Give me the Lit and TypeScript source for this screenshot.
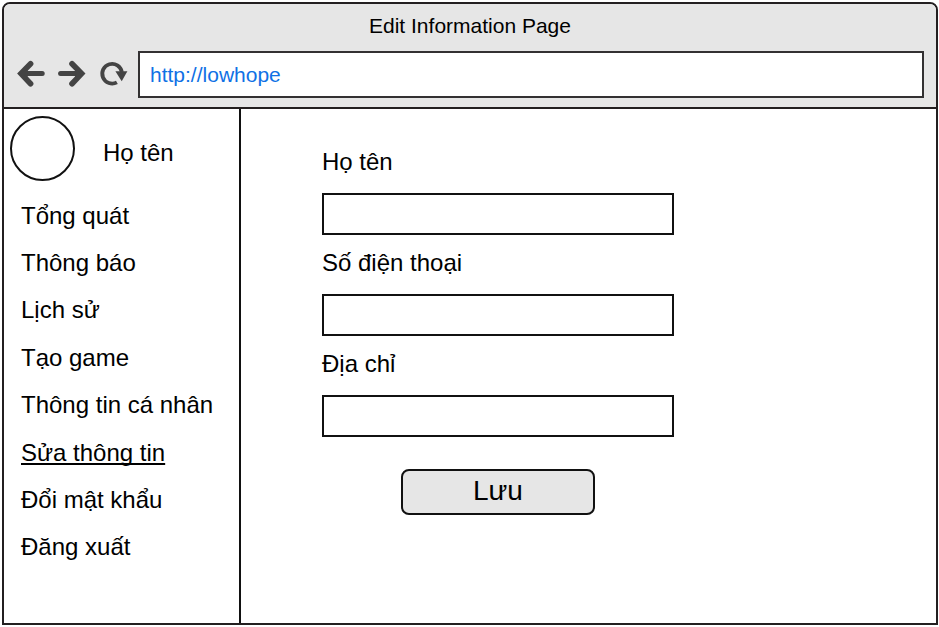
import { LitElement, html, css } from "lit";
import { customElement } from "lit/decorators.js";

@customElement("browser-bar")
class BrowserBar extends LitElement {
  static styles = css`
    :host {
      display: block;
      box-sizing: border-box;
      padding: 6px 12px 9px;
      background: #e6e6e6;
      border-bottom: 2px solid #231f20;
      border-radius: 6px 6px 0 0;
    }
    .title {
      margin: 0 0 9px;
      font-size: 21px;
      font-weight: 400;
      line-height: 32px;
      text-align: center;
    }
    .tools {
      display: flex;
      align-items: center;
    }
    .tool {
      display: flex;
      padding: 0 0 2px;
      border: 0;
      background: none;
      margin-right: 12px;
    }
    .reload {
      margin-right: 10px;
    }
    .address {
      flex: 1;
      min-width: 0;
      box-sizing: border-box;
      height: 47px;
      margin: 0;
      padding: 0 10px;
      border: 2px solid #333132;
      border-radius: 0;
      background: #fff;
      color: #1071e5;
      font: inherit;
      font-size: 21px;
    }
  `;

  render() {
    return html`
      <h1 class="title">Edit Information Page</h1>
      <div class="tools">
        <button class="tool" type="button" aria-label="Back">
          <svg width="29" height="28" viewBox="0 0 29 28" fill="none" stroke="#444" stroke-linecap="round">
            <path d="M14.6 3.7 5 13.6 14.6 23.7" stroke-width="5.6" />
            <path d="M6 13.6H26.2" stroke-width="5" />
            <path d="M6 13.6 11 9V18.200Z" fill="#444" stroke-width="1" />
          </svg>
        </button>
        <button class="tool" type="button" aria-label="Forward">
          <svg width="29" height="28" viewBox="0 0 29 28" fill="none" stroke="#444" stroke-linecap="round">
            <path d="M15 3.7 24.600 13.6 15 23.7" stroke-width="5.6" />
            <path d="M3.600 13.6H23.600" stroke-width="5" />
            <path d="M23.600 13.6 18.600 9V18.200Z" fill="#444" stroke-width="1" />
          </svg>
        </button>
        <button class="tool reload" type="button" aria-label="Reload">
          <svg width="30" height="28" viewBox="0 0 30 28" fill="none">
            <path d="M18.900 22.400A9.900 9.900 0 1 1 23.900 12" stroke="#444" stroke-width="3.800" />
            <path d="M17.400 11.200H29.400L23.700 21.200Z" fill="#444" />
          </svg>
        </button>
        <input class="address" type="text" aria-label="Address" value="http://lowhope" />
      </div>
    `;
  }
}

@customElement("side-menu")
class SideMenu extends LitElement {
  static styles = css`
    :host {
      display: flex;
      flex-direction: column;
      box-sizing: border-box;
      width: 237px;
      border-right: 2px solid #111;
      padding: 7px 0 52px;
    }
    .profile {
      display: flex;
      align-items: flex-start;
      gap: 28px;
      padding-left: 6px;
      height: 76px;
    }
    .avatar {
      box-sizing: border-box;
      width: 65px;
      height: 65px;
      border: 2px solid #111;
      border-radius: 50%;
    }
    .name {
      line-height: 73px;
    }
    .menu {
      flex: 1;
      display: grid;
      grid-auto-rows: 1fr;
      align-items: center;
      margin: 0;
      padding: 0 0 0 17px;
      list-style: none;
    }
    .link {
      color: inherit;
      text-decoration: none;
      white-space: nowrap;
    }
    .current {
      text-decoration: underline 2px;
      text-underline-offset: 2px;
      text-decoration-skip-ink: none;
    }
  `;

  private items = [
    "Tổng quát",
    "Thông báo",
    "Lịch sử",
    "Tạo game",
    "Thông tin cá nhân",
    "Sửa thông tin",
    "Đổi mật khẩu",
    "Đăng xuất",
  ];

  render() {
    return html`
      <div class="profile">
        <div class="avatar"></div>
        <span class="name">Họ tên</span>
      </div>
      <ul class="menu">
        ${this.items.map(
          (item) => html`<li>
            <a class="link ${item === "Sửa thông tin" ? "current" : ""}" href="#">${item}</a>
          </li>`
        )}
      </ul>
    `;
  }
}

@customElement("edit-form")
class EditForm extends LitElement {
  static styles = css`
    :host {
      display: block;
      flex: 1;
      min-width: 0;
      padding: 37px 81px;
    }
    .form {
      display: flex;
      flex-direction: column;
      max-width: 352px;
    }
    .label {
      line-height: 32px;
      margin-bottom: 15px;
    }
    .field {
      box-sizing: border-box;
      width: 100%;
      height: 42px;
      margin: 0 0 12px;
      padding: 0 8px;
      border: 2px solid #111;
      border-radius: 0;
      background: #fff;
      font: inherit;
    }
    .save {
      align-self: center;
      box-sizing: border-box;
      width: 194px;
      height: 46px;
      margin: 20px 0 0;
      padding: 0 0 2px;
      border: 2px solid #111;
      border-radius: 8px;
      background: #e6e6e6;
      color: inherit;
      font: inherit;
      font-size: 28px;
    }
  `;

  render() {
    return html`
      <form class="form">
        <label class="label" for="name">Họ tên</label>
        <input class="field" id="name" type="text" />
        <label class="label" for="phone">Số điện thoại</label>
        <input class="field" id="phone" type="tel" />
        <label class="label" for="address">Địa chỉ</label>
        <input class="field" id="address" type="text" />
        <button class="save" type="button">Lưu</button>
      </form>
    `;
  }
}

@customElement("app-root")
class AppRoot extends LitElement {
  static styles = css`
    :host {
      display: flex;
      box-sizing: border-box;
      min-height: 100vh;
      padding: 2px 1px 2px 2px;
      background: #fff;
      color: #000;
      font: 24px "Liberation Sans", Arial, sans-serif;
    }
    .window {
      flex: 1;
      min-width: 0;
      display: flex;
      flex-direction: column;
      border: 2px solid #231f20;
      border-radius: 8px 8px 0 0;
    }
    .content {
      flex: 1;
      display: flex;
    }
  `;

  render() {
    return html`
      <div class="window">
        <browser-bar></browser-bar>
        <main class="content">
          <side-menu></side-menu>
          <edit-form></edit-form>
        </main>
      </div>
    `;
  }
}
